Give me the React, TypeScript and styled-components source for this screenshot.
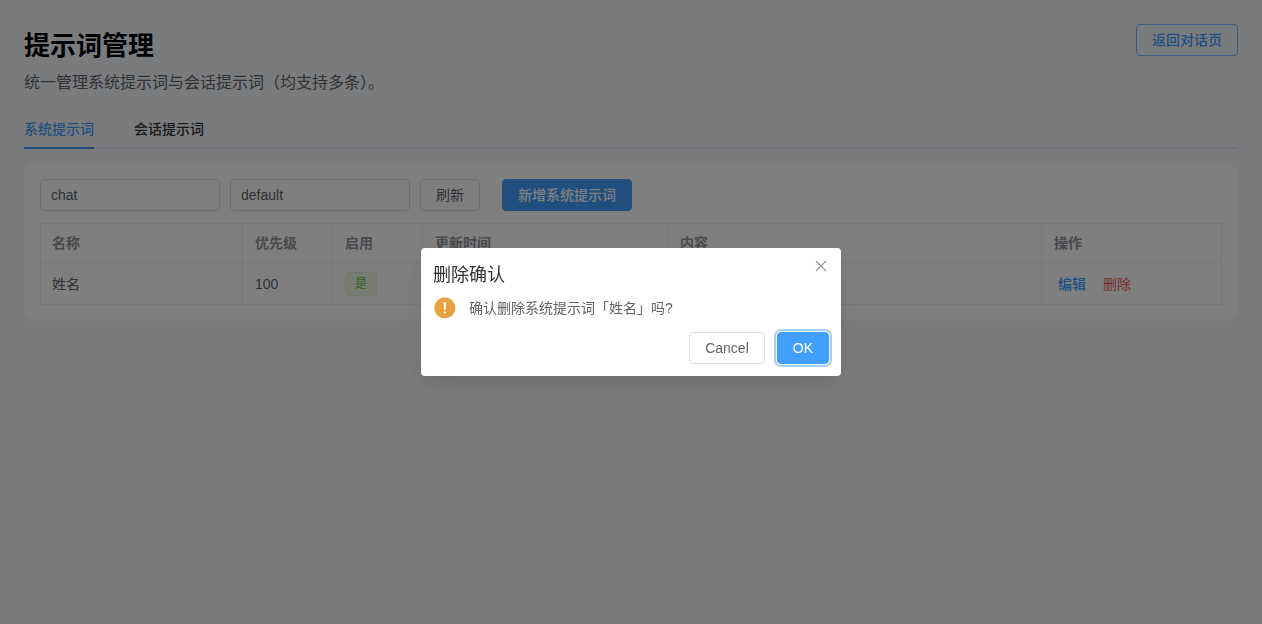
import React from "react";
import styled, { createGlobalStyle } from "styled-components";

const Global = createGlobalStyle`
  html, body { margin: 0; padding: 0; height: 100%; }
  body {
    background: #f5f7fb;
    font-family: "Liberation Sans", "Noto Sans CJK SC", sans-serif;
    color: #303133;
  }
  * { box-sizing: border-box; }
`;

const Page = styled.div`
  min-height: 624px;
  padding: 24px;
`;
const Header = styled.header`
  display: flex;
  justify-content: space-between;
  align-items: flex-start;
`;
const Title = styled.h1`
  margin: 0;
  font-size: 26px;
  line-height: 44px;
  font-weight: 700;
  color: #000;
`;
const Subtitle = styled.p`
  margin: 0;
  padding-top: 3px;
  font-size: 16px;
  line-height: 24px;
  color: #606266;
`;
const Button = styled.button<{ $variant?: "primary" | "outline" | "default" | "focus" }>`
  display: inline-flex;
  align-items: center;
  justify-content: center;
  height: 32px;
  padding: 0 15px;
  border-radius: 4px;
  font: inherit;
  font-size: 14px;
  line-height: 1;
  font-weight: ${(p) => (p.$variant === "primary" || p.$variant === "outline" ? 500 : 400)};
  border: 1px solid
    ${(p) =>
      p.$variant === "primary" || p.$variant === "focus"
        ? "#409eff"
        : p.$variant === "outline"
          ? "#79bbff"
          : "#dcdfe6"};
  color: ${(p) =>
    p.$variant === "primary" || p.$variant === "focus"
      ? "#fff"
      : p.$variant === "outline"
        ? "#409eff"
        : "#606266"};
  background: ${(p) =>
    p.$variant === "primary" || p.$variant === "focus"
      ? "#409eff"
      : p.$variant === "outline"
        ? "transparent"
        : "#fff"};
  box-shadow: ${(p) => (p.$variant === "focus" ? "0 0 0 1px #fff, 0 0 0 3px #a0cfff" : "none")};
`;
const Tabs = styled.nav`
  display: flex;
  gap: 40px;
  margin-top: 20px;
  height: 34px;
  border-bottom: 2px solid #e4e7ed;
`;
const Tab = styled.div<{ $active?: boolean }>`
  height: 34px;
  line-height: 28px;
  font-size: 14px;
  font-weight: 500;
  color: ${(p) => (p.$active ? "#409eff" : "#303133")};
  border-bottom: 2px solid ${(p) => (p.$active ? "#409eff" : "transparent")};
`;
const Card = styled.section`
  margin-top: 14px;
  padding: 16px;
  border-radius: 12px;
  background: #fff;
`;
const Toolbar = styled.div`
  display: flex;
  align-items: center;
  gap: 10px;
  margin-bottom: 12px;
`;
const Field = styled.input`
  width: 180px;
  height: 32px;
  padding: 0 10px;
  border: 1px solid #dcdfe6;
  border-radius: 4px;
  font: inherit;
  font-size: 14px;
  color: #606266;
  background: #fff;
`;
const AddButton = styled(Button)`
  margin-left: 12px;
`;
const Table = styled.table`
  width: 1182px;
  table-layout: fixed;
  border-collapse: separate;
  border-spacing: 0;
  font-size: 14px;
  line-height: 20px;
`;
const Th = styled.th`
  height: 40px;
  padding: 0 12px;
  text-align: left;
  font-weight: 700;
  color: #909399;
  border-top: 1px solid #ebeef5;
  border-bottom: 1px solid #ebeef5;
  border-left: 1px solid #ebeef5;
  &:first-child { padding-left: 11px; }
  &:last-child { border-right: 1px solid #ebeef5; }
`;
const Td = styled.td`
  height: 42px;
  padding: 0 12px;
  color: #606266;
  border-bottom: 1px solid #ebeef5;
  border-left: 1px solid #ebeef5;
  &:first-child { padding-left: 11px; }
  &:last-child { border-right: 1px solid #ebeef5; }
`;
const Tag = styled.span`
  display: inline-flex;
  align-items: center;
  justify-content: center;
  vertical-align: middle;
  width: 32px;
  height: 24px;
  border-radius: 4px;
  font-size: 12px;
  color: #67c23a;
  background: #f0f9eb;
  border: 1px solid #e1f3d8;
`;
const LinkBtn = styled.span<{ $danger?: boolean }>`
  display: inline-block;
  font-weight: 500;
  margin: 0 4px;
  color: ${(p) => (p.$danger ? "#f4574f" : "#409eff")};
  & + & { margin-left: 13px; font-weight: 400; }
`;
const Overlay = styled.div`
  position: fixed;
  inset: 0;
  background: rgba(0, 0, 0, 0.5);
`;
const Dialog = styled.div`
  position: absolute;
  left: 421px;
  top: 248px;
  width: 420px;
  height: 128px;
  padding: 12px;
  border-radius: 4px;
  background: #fff;
  box-shadow: 0 12px 32px 4px rgba(0, 0, 0, 0.04), 0 8px 20px rgba(0, 0, 0, 0.08);
`;
const DialogTitle = styled.div`
  font-size: 18px;
  line-height: 28px;
  padding-top: 1px;
  color: #303133;
`;
const Close = styled.button`
  position: absolute;
  right: 12px;
  top: 10px;
  width: 16px;
  height: 16px;
  padding: 0;
  border: 0;
  background: none;
  color: #909399;
  display: flex;
`;
const Message = styled.div`
  display: flex;
  align-items: center;
  gap: 13px;
  margin-top: 6px;
  height: 24px;
  font-size: 14px;
  color: #606266;
`;
const Actions = styled.div`
  display: flex;
  justify-content: flex-end;
  gap: 12px;
  margin-top: 13px;
`;

const widths = [202, 90, 90, 245, 374, 181];
const heads = ["名称", "优先级", "启用", "更新时间", "内容", "操作"];

export default function App() {
  return (
    <Page>
      <Global />
      <Header>
        <div>
          <Title>提示词管理</Title>
          <Subtitle>统一管理系统提示词与会话提示词（均支持多条）。</Subtitle>
        </div>
        <Button $variant="outline">返回对话页</Button>
      </Header>
      <Tabs>
        <Tab $active>系统提示词</Tab>
        <Tab>会话提示词</Tab>
      </Tabs>
      <Card>
        <Toolbar>
          <Field defaultValue="chat" />
          <Field defaultValue="default" />
          <Button>刷新</Button>
          <AddButton $variant="primary">新增系统提示词</AddButton>
        </Toolbar>
        <Table>
          <colgroup>
            {widths.map((w, i) => (
              <col key={i} style={{ width: w }} />
            ))}
          </colgroup>
          <thead>
            <tr>
              {heads.map((h) => (
                <Th key={h}>{h}</Th>
              ))}
            </tr>
          </thead>
          <tbody>
            <tr>
              <Td>姓名</Td>
              <Td>100</Td>
              <Td>
                <Tag>是</Tag>
              </Td>
              <Td />
              <Td />
              <Td>
                <LinkBtn>编辑</LinkBtn>
                <LinkBtn $danger>删除</LinkBtn>
              </Td>
            </tr>
          </tbody>
        </Table>
      </Card>
      <Overlay>
        <Dialog>
          <DialogTitle>删除确认</DialogTitle>
          <Close aria-label="close">
            <svg width="16" height="16" viewBox="0 0 16 16" fill="none" stroke="currentColor" strokeWidth="1.1">
              <path d="M3 3l10 10M13 3L3 13" />
            </svg>
          </Close>
          <Message>
            <svg width="23" height="24" viewBox="0 0 23 24">
              <circle cx="11.8" cy="12.8" r="10.5" fill="#e6a23c" />
              <path d="M10.6 7.3h2.4l-.5 7.6h-1.4z" fill="#fff" />
              <circle cx="11.8" cy="17.4" r="1.1" fill="#fff" />
            </svg>
            确认删除系统提示词「姓名」吗?
          </Message>
          <Actions>
            <Button>Cancel</Button>
            <Button $variant="focus">OK</Button>
          </Actions>
        </Dialog>
      </Overlay>
    </Page>
  );
}
